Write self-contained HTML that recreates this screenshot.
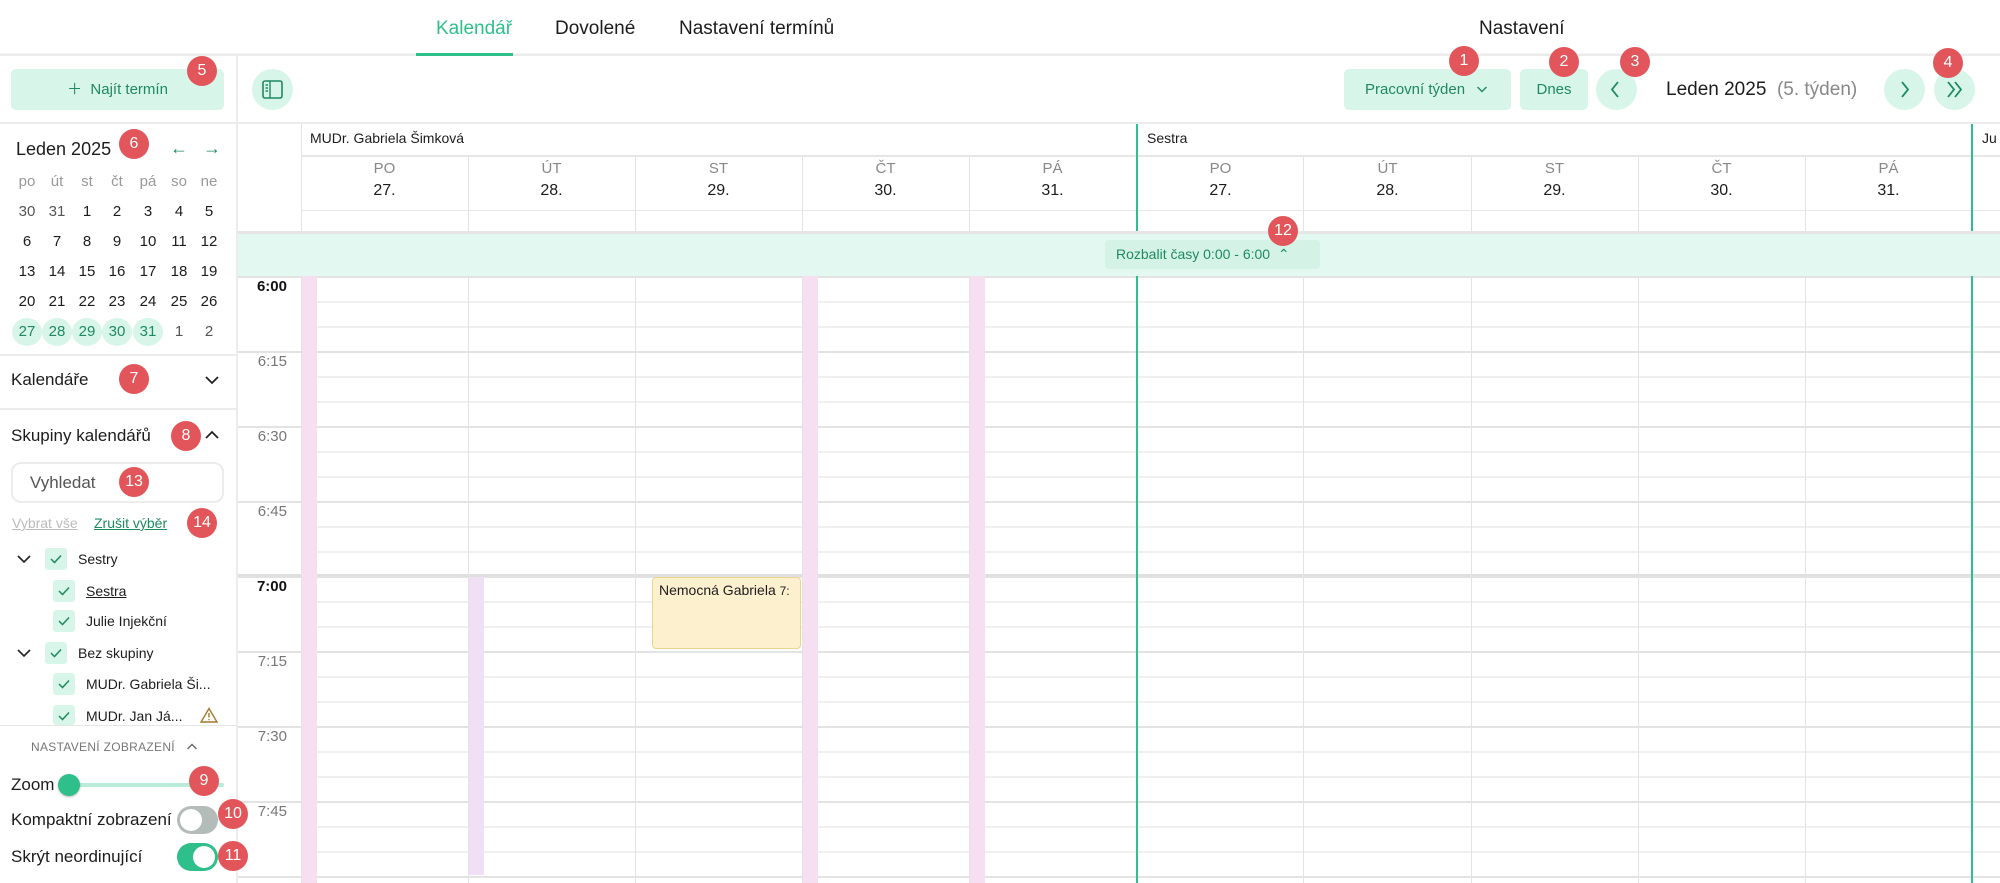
<!DOCTYPE html>
<html><head><meta charset="utf-8">
<style>
*{box-sizing:border-box;margin:0;padding:0}
body{width:2000px;height:883px;overflow:hidden;background:#fff;font-family:"Liberation Sans",sans-serif;color:#1c1c1c;position:relative}
.a{position:absolute;white-space:nowrap}
.b{position:absolute;width:30px;height:30px;border-radius:50%;background:#e2555a;color:#fff;font-size:16px;text-align:center;line-height:30px;margin:-15px 0 0 -15px;z-index:10}
.g{color:#1f8a5f}
.mc{position:absolute;width:30px;text-align:center;font-size:15px;margin-left:-15px}
.sel{background:#d8f5ea;border-radius:50%;height:28px;line-height:28px;color:#1f8a5f}
.cb{position:absolute;width:22px;height:22px;background:#d8f5ea;border-radius:3px}
.cb svg{position:absolute;left:5px;top:6px}
.hd{position:absolute;text-align:center;width:167px}
.tl{position:absolute;right:0;width:60px;text-align:right;padding-right:14px;font-size:15px;color:#777}
</style></head><body>
<!-- top nav -->
<div class="a" style="left:0;top:0;width:2000px;height:56px;border-bottom:2px solid #ececec;box-shadow:0 -1px 0 #f4f4f4 inset"></div>
<div class="a" style="left:436px;top:18px;font-size:19px;color:#2fbf8a">Kalendář</div>
<div class="a" style="left:416px;top:53px;width:97px;height:3px;background:#2fbf8a"></div>
<div class="a" style="left:555px;top:18px;font-size:19px">Dovolené</div>
<div class="a" style="left:679px;top:18px;font-size:19px">Nastavení termínů</div>
<div class="a" style="left:1479px;top:18px;font-size:19px">Nastavení</div>

<!-- sidebar -->
<div class="a" style="left:236px;top:56px;width:2px;height:827px;background:#ececec"></div>
<div class="a" style="left:11px;top:69px;width:213px;height:41px;background:#d8f5ea;border-radius:5px;font-size:15px;text-align:center;line-height:41px" ><span class="g">＋&nbsp; Najít termín</span></div>
<div class="a" style="left:0;top:122px;width:236px;height:2px;background:#ececec"></div>
<div class="a" style="left:16px;top:139px;font-size:18px">Leden 2025</div>
<div class="a g" style="left:170px;top:138px;font-size:18px">←</div>
<div class="a g" style="left:203px;top:138px;font-size:18px">→</div>
<div style="color:#999">
<div class="mc" style="left:27px;top:173px">po</div><div class="mc" style="left:57px;top:173px">út</div><div class="mc" style="left:87px;top:173px">st</div><div class="mc" style="left:117px;top:173px">čt</div><div class="mc" style="left:148px;top:173px">pá</div><div class="mc" style="left:179px;top:173px">so</div><div class="mc" style="left:209px;top:173px">ne</div>
</div>
<div class="mc" style="left:27px;top:203px;color:#555">30</div><div class="mc" style="left:57px;top:203px;color:#555">31</div><div class="mc" style="left:87px;top:203px">1</div><div class="mc" style="left:117px;top:203px">2</div><div class="mc" style="left:148px;top:203px">3</div><div class="mc" style="left:179px;top:203px">4</div><div class="mc" style="left:209px;top:203px">5</div>
<div class="mc" style="left:27px;top:233px">6</div><div class="mc" style="left:57px;top:233px">7</div><div class="mc" style="left:87px;top:233px">8</div><div class="mc" style="left:117px;top:233px">9</div><div class="mc" style="left:148px;top:233px">10</div><div class="mc" style="left:179px;top:233px">11</div><div class="mc" style="left:209px;top:233px">12</div>
<div class="mc" style="left:27px;top:263px">13</div><div class="mc" style="left:57px;top:263px">14</div><div class="mc" style="left:87px;top:263px">15</div><div class="mc" style="left:117px;top:263px">16</div><div class="mc" style="left:148px;top:263px">17</div><div class="mc" style="left:179px;top:263px">18</div><div class="mc" style="left:209px;top:263px">19</div>
<div class="mc" style="left:27px;top:293px">20</div><div class="mc" style="left:57px;top:293px">21</div><div class="mc" style="left:87px;top:293px">22</div><div class="mc" style="left:117px;top:293px">23</div><div class="mc" style="left:148px;top:293px">24</div><div class="mc" style="left:179px;top:293px">25</div><div class="mc" style="left:209px;top:293px">26</div>
<div class="mc sel" style="left:27px;top:318px">27</div><div class="mc sel" style="left:57px;top:318px">28</div><div class="mc sel" style="left:87px;top:318px">29</div><div class="mc sel" style="left:117px;top:318px">30</div><div class="mc sel" style="left:148px;top:318px">31</div><div class="mc" style="left:179px;top:323px;color:#555">1</div><div class="mc" style="left:209px;top:323px;color:#555">2</div>
<div class="a" style="left:0;top:354px;width:236px;height:2px;background:#ececec"></div>
<div class="a" style="left:11px;top:370px;font-size:17px">Kalendáře</div>
<svg class="a" style="left:204px;top:374px" width="16" height="12"><path d="M2 3 L8 9 L14 3" fill="none" stroke="#222" stroke-width="1.8"/></svg>
<div class="a" style="left:0;top:408px;width:236px;height:2px;background:#ececec"></div>
<div class="a" style="left:11px;top:426px;font-size:17px">Skupiny kalendářů</div>
<svg class="a" style="left:204px;top:429px" width="16" height="12"><path d="M2 9 L8 3 L14 9" fill="none" stroke="#222" stroke-width="1.8"/></svg>
<div class="a" style="left:11px;top:462px;width:213px;height:41px;border:2px solid #ececec;border-radius:10px;font-size:17px;color:#555;padding:9px 0 0 17px">Vyhledat</div>
<div class="a" style="left:12px;top:515px;font-size:14px;color:#bbb;text-decoration:underline">Vybrat vše</div>
<div class="a" style="left:94px;top:515px;font-size:14px;color:#1f8a5f;text-decoration:underline">Zrušit výběr</div>
<svg class="a" style="left:16px;top:553px" width="16" height="12"><path d="M2 3 L8 9 L14 3" fill="none" stroke="#222" stroke-width="1.6"/></svg>
<div class="cb" style="left:45px;top:548px"><svg width="12" height="10"><path d="M1 5 L4.5 8.5 L11 1.5" fill="none" stroke="#1f8a5f" stroke-width="1.5"/></svg></div>
<div class="a" style="left:78px;top:551px;font-size:14px">Sestry</div>
<div class="cb" style="left:53px;top:580px"><svg width="12" height="10"><path d="M1 5 L4.5 8.5 L11 1.5" fill="none" stroke="#1f8a5f" stroke-width="1.5"/></svg></div>
<div class="a" style="left:86px;top:583px;font-size:14px;text-decoration:underline">Sestra</div>
<div class="cb" style="left:53px;top:610px"><svg width="12" height="10"><path d="M1 5 L4.5 8.5 L11 1.5" fill="none" stroke="#1f8a5f" stroke-width="1.5"/></svg></div>
<div class="a" style="left:86px;top:613px;font-size:14px">Julie Injekční</div>
<svg class="a" style="left:16px;top:647px" width="16" height="12"><path d="M2 3 L8 9 L14 3" fill="none" stroke="#222" stroke-width="1.6"/></svg>
<div class="cb" style="left:45px;top:642px"><svg width="12" height="10"><path d="M1 5 L4.5 8.5 L11 1.5" fill="none" stroke="#1f8a5f" stroke-width="1.5"/></svg></div>
<div class="a" style="left:78px;top:645px;font-size:14px">Bez skupiny</div>
<div class="cb" style="left:53px;top:673px"><svg width="12" height="10"><path d="M1 5 L4.5 8.5 L11 1.5" fill="none" stroke="#1f8a5f" stroke-width="1.5"/></svg></div>
<div class="a" style="left:86px;top:676px;font-size:14px">MUDr. Gabriela Ši...</div>
<div class="cb" style="left:53px;top:705px;height:20px"><svg width="12" height="10"><path d="M1 5 L4.5 8.5 L11 1.5" fill="none" stroke="#1f8a5f" stroke-width="1.5"/></svg></div>
<div class="a" style="left:86px;top:708px;font-size:14px">MUDr. Jan Já...</div>
<svg class="a" style="left:200px;top:707px" width="18" height="16"><path d="M9 1.5 L17 15 L1 15 Z" fill="none" stroke="#a5782a" stroke-width="1.4"/><path d="M9 6 V10.5 M9 12 V13.2" stroke="#a5782a" stroke-width="1.4"/></svg>
<div class="a" style="left:0;top:725px;width:236px;height:1px;background:#e6e6e6"></div>
<div class="a" style="left:31px;top:740px;font-size:12px;color:#777;letter-spacing:0.3px">NASTAVENÍ ZOBRAZENÍ</div>
<svg class="a" style="left:186px;top:742px" width="12" height="10"><path d="M1.5 7 L6 2.5 L10.5 7" fill="none" stroke="#666" stroke-width="1.4"/></svg>
<div class="a" style="left:11px;top:775px;font-size:17px">Zoom</div>
<div class="a" style="left:68px;top:783px;width:156px;height:4px;background:#b9ecd8;border-radius:2px"></div>
<div class="a" style="left:58px;top:774px;width:22px;height:22px;border-radius:50%;background:#2fbf8a;box-shadow:0 1px 2px rgba(0,0,0,.3)"></div>
<div class="a" style="left:11px;top:810px;font-size:17px">Kompaktní zobrazení</div>
<div class="a" style="left:177px;top:806px;width:41px;height:28px;border-radius:14px;background:#b3bcb8"></div>
<div class="a" style="left:180px;top:809px;width:22px;height:22px;border-radius:50%;background:#fff"></div>
<div class="a" style="left:11px;top:847px;font-size:17px">Skrýt neordinující</div>
<div class="a" style="left:177px;top:843px;width:41px;height:28px;border-radius:14px;background:#2fbf8a"></div>
<div class="a" style="left:193px;top:846px;width:22px;height:22px;border-radius:50%;background:#fff"></div>

<!-- toolbar -->
<div class="a" style="left:252px;top:69px;width:41px;height:41px;border-radius:50%;background:#d8f5ea"></div>
<svg class="a" style="left:262px;top:80px" width="21" height="19"><rect x="1" y="1" width="19" height="17" rx="2" fill="none" stroke="#1f8a5f" stroke-width="1.6"/><path d="M8 1 V18 M3.5 5 H6 M3.5 8 H6 M3.5 11 H6" stroke="#1f8a5f" stroke-width="1.4"/></svg>
<div class="a" style="left:238px;top:122px;width:1762px;height:2px;background:#ececec"></div>
<div class="a" style="left:1344px;top:69px;width:167px;height:41px;background:#d8f5ea;border-radius:5px;font-size:15px;line-height:41px;padding-left:21px"><span class="g">Pracovní týden</span></div>
<svg class="a" style="left:1476px;top:85px" width="12" height="9"><path d="M1.5 2 L6 6.5 L10.5 2" fill="none" stroke="#1f8a5f" stroke-width="1.4"/></svg>
<div class="a" style="left:1520px;top:69px;width:68px;height:41px;background:#d8f5ea;border-radius:5px;font-size:15px;line-height:41px;text-align:center"><span class="g">Dnes</span></div>
<div class="a" style="left:1596px;top:69px;width:41px;height:41px;border-radius:50%;background:#d8f5ea"></div>
<svg class="a" style="left:1609px;top:80px" width="12" height="19"><path d="M9 2 L3 9.5 L9 17" fill="none" stroke="#1f8a5f" stroke-width="1.8"/></svg>
<div class="a" style="left:1666px;top:79px;font-size:19px">Leden 2025 <span style="color:#888">&nbsp;(5. týden)</span></div>
<div class="a" style="left:1884px;top:69px;width:41px;height:41px;border-radius:50%;background:#d8f5ea"></div>
<svg class="a" style="left:1899px;top:80px" width="12" height="19"><path d="M3 2 L9 9.5 L3 17" fill="none" stroke="#1f8a5f" stroke-width="1.8"/></svg>
<div class="a" style="left:1934px;top:69px;width:41px;height:41px;border-radius:50%;background:#d8f5ea"></div>
<svg class="a" style="left:1945px;top:80px" width="20" height="19"><path d="M3 2 L9 9.5 L3 17 M10 2 L16 9.5 L10 17" fill="none" stroke="#1f8a5f" stroke-width="1.8"/></svg>

<!-- calendar header -->
<div class="a" style="left:310px;top:130px;font-size:14px">MUDr. Gabriela Šimková</div>
<div class="a" style="left:1147px;top:130px;font-size:14px">Sestra</div>
<div class="a" style="left:1982px;top:130px;font-size:14px">Ju</div>
<div class="a" style="left:301px;top:155px;width:1699px;height:2px;background:#e6e6e6"></div>
<div class="a" style="left:301px;top:210px;width:1699px;height:1px;background:#e8e8e8"></div>
<div class="a" style="left:238px;top:231px;width:1762px;height:3px;background:#e6e6e6;z-index:5"></div>
<div style="font-size:15px">
<div class="hd" style="left:301px;top:160px;color:#888">PO</div><div class="hd" style="left:301px;top:182px;font-size:16px">27.</div>
<div class="hd" style="left:468px;top:160px;color:#888">ÚT</div><div class="hd" style="left:468px;top:182px;font-size:16px">28.</div>
<div class="hd" style="left:635px;top:160px;color:#888">ST</div><div class="hd" style="left:635px;top:182px;font-size:16px">29.</div>
<div class="hd" style="left:802px;top:160px;color:#888">ČT</div><div class="hd" style="left:802px;top:182px;font-size:16px">30.</div>
<div class="hd" style="left:969px;top:160px;color:#888">PÁ</div><div class="hd" style="left:969px;top:182px;font-size:16px">31.</div>
<div class="hd" style="left:1137px;top:160px;color:#888">PO</div><div class="hd" style="left:1137px;top:182px;font-size:16px">27.</div>
<div class="hd" style="left:1304px;top:160px;color:#888">ÚT</div><div class="hd" style="left:1304px;top:182px;font-size:16px">28.</div>
<div class="hd" style="left:1471px;top:160px;color:#888">ST</div><div class="hd" style="left:1471px;top:182px;font-size:16px">29.</div>
<div class="hd" style="left:1638px;top:160px;color:#888">ČT</div><div class="hd" style="left:1638px;top:182px;font-size:16px">30.</div>
<div class="hd" style="left:1805px;top:160px;color:#888">PÁ</div><div class="hd" style="left:1805px;top:182px;font-size:16px">31.</div>
</div>
<!-- green band -->
<div class="a" style="left:238px;top:234px;width:1762px;height:42px;background:#e3f8f0;z-index:5"></div>
<div class="a" style="left:1105px;top:240px;width:215px;height:29px;background:#d4f3e6;border-radius:4px;font-size:14px;line-height:29px;padding-left:11px;z-index:6"><span class="g">Rozbalit časy 0:00 - 6:00 &nbsp;⌃</span></div>

<!-- grid -->
<div class="a" style="left:238px;top:276px;width:1762px;height:607px;background:repeating-linear-gradient(to bottom,#e3e3e3 0,#e3e3e3 2px,transparent 2px,transparent 75px)"></div>
<div class="a" style="left:301px;top:276px;width:1699px;height:607px;background:repeating-linear-gradient(to bottom,transparent 0,transparent 25px,#f0f0f0 25px,#f0f0f0 27px,transparent 27px,transparent 50px,#f0f0f0 50px,#f0f0f0 52px,transparent 52px,transparent 75px)"></div>
<div class="a" style="left:238px;top:574px;width:1762px;height:3px;background:#e0e0e0"></div>
<!-- vertical lines -->
<div class="a" style="left:301px;top:124px;width:1px;height:759px;background:#e3e3e3"></div>
<div class="a" style="left:468px;top:157px;width:1px;height:726px;background:#e3e3e3"></div>
<div class="a" style="left:635px;top:157px;width:1px;height:726px;background:#e3e3e3"></div>
<div class="a" style="left:802px;top:157px;width:1px;height:726px;background:#e3e3e3"></div>
<div class="a" style="left:969px;top:157px;width:1px;height:726px;background:#e3e3e3"></div>
<div class="a" style="left:1303px;top:157px;width:1px;height:726px;background:#e3e3e3"></div>
<div class="a" style="left:1471px;top:157px;width:1px;height:726px;background:#e3e3e3"></div>
<div class="a" style="left:1638px;top:157px;width:1px;height:726px;background:#e3e3e3"></div>
<div class="a" style="left:1805px;top:157px;width:1px;height:726px;background:#e3e3e3"></div>
<div class="a" style="left:1136px;top:124px;width:2px;height:759px;background:#2fbf8a"></div>
<div class="a" style="left:1971px;top:124px;width:2px;height:759px;background:#2fbf8a"></div>
<!-- stripes -->
<div class="a" style="left:302px;top:276px;width:15px;height:607px;background:#f5dff0"></div>
<div class="a" style="left:469px;top:577px;width:15px;height:298px;background:#efe0f5"></div>
<div class="a" style="left:803px;top:276px;width:15px;height:607px;background:#f5dff0"></div>
<div class="a" style="left:970px;top:276px;width:15px;height:607px;background:#f5dff0"></div>
<!-- event -->
<div class="a" style="left:652px;top:577px;width:149px;height:72px;background:#fcf0cf;border:1px solid #ecd48e;border-radius:4px;font-size:14px;padding:4px 6px;overflow:hidden">Nemocná Gabriela <span style="font-size:12px">7:</span></div>
<!-- time labels -->
<div class="a" style="left:238px;top:276px;width:63px">
<div class="tl" style="top:2px;color:#111;font-weight:bold">6:00</div>
<div class="tl" style="top:77px">6:15</div>
<div class="tl" style="top:152px">6:30</div>
<div class="tl" style="top:227px">6:45</div>
<div class="tl" style="top:302px;color:#111;font-weight:bold">7:00</div>
<div class="tl" style="top:377px">7:15</div>
<div class="tl" style="top:452px">7:30</div>
<div class="tl" style="top:527px">7:45</div>
</div>

<!-- badges -->
<div class="b" style="left:1464px;top:61px">1</div>
<div class="b" style="left:1564px;top:62px">2</div>
<div class="b" style="left:1635px;top:62px">3</div>
<div class="b" style="left:1948px;top:63px">4</div>
<div class="b" style="left:202px;top:71px">5</div>
<div class="b" style="left:134px;top:144px">6</div>
<div class="b" style="left:134px;top:379px">7</div>
<div class="b" style="left:186px;top:436px">8</div>
<div class="b" style="left:204px;top:781px">9</div>
<div class="b" style="left:233px;top:814px">10</div>
<div class="b" style="left:233px;top:856px">11</div>
<div class="b" style="left:1283px;top:231px">12</div>
<div class="b" style="left:134px;top:482px">13</div>
<div class="b" style="left:202px;top:523px">14</div>
</body></html>
